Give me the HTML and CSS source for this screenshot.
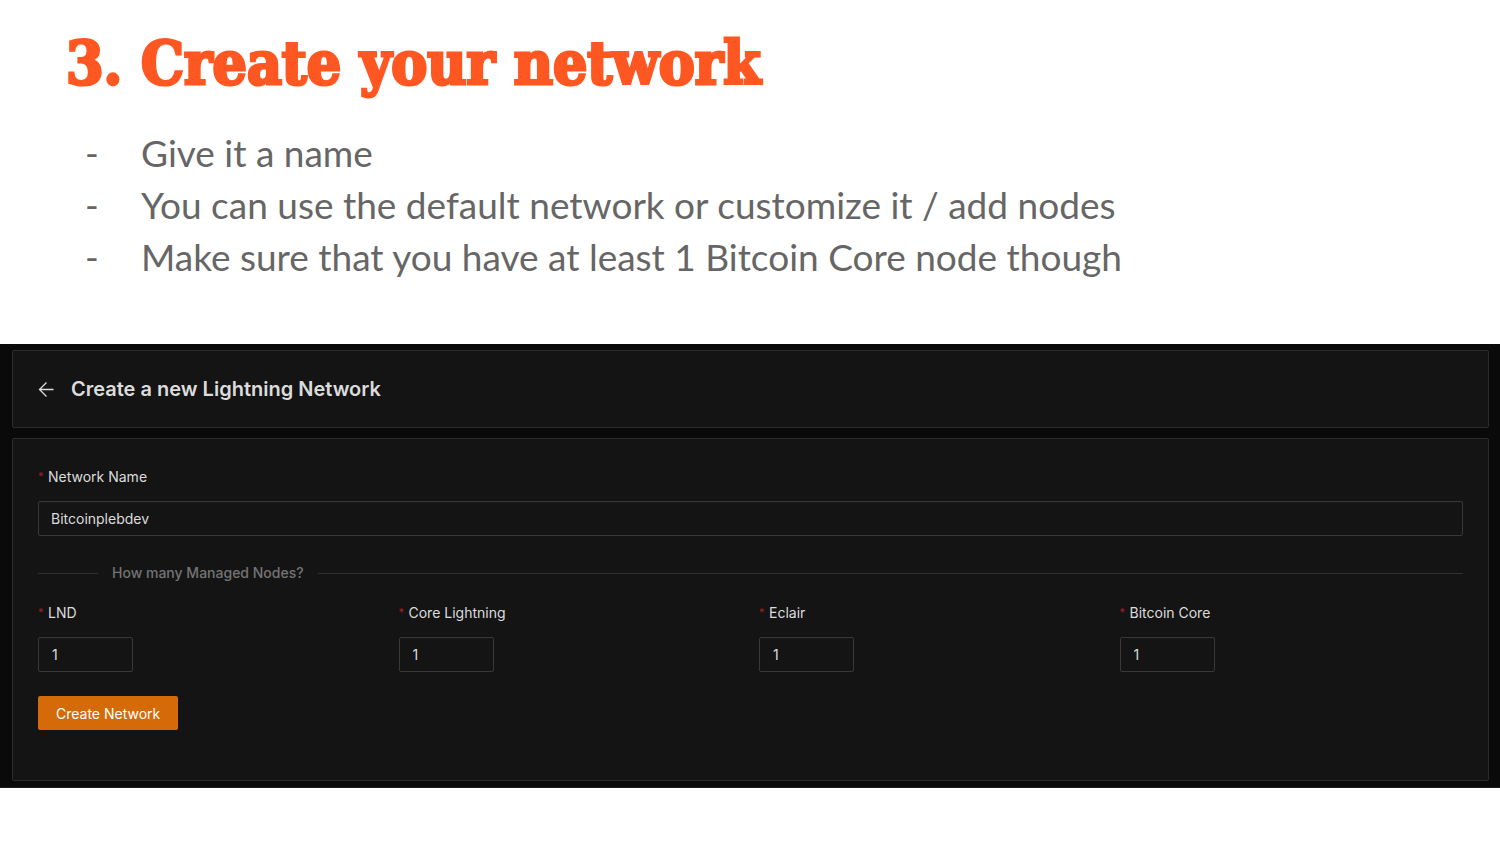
FILE: index.html
```html
<!DOCTYPE html>
<html lang="en">

<head>
    <meta charset="UTF-8">
    <meta name="viewport" content="width=device-width, initial-scale=1.0">
    <title>Create your network</title>
    <link rel="stylesheet" href="styles.css">
</head>

<body>
    <header class="intro">
        <h1>3. Create your network</h1>
        <ul>
            <li>Give it a name</li>
            <li>You can use the default network or customize it / add nodes</li>
            <li>Make sure that you have at least 1 Bitcoin Core node though</li>
        </ul>
    </header>
    <main class="app">
        <div class="card page-header">
            <button type="button" class="back" aria-label="Back">
                <svg viewBox="0 0 16 16" width="16" height="16">
                    <path d="M15.5 8.5H2M8.5 1.5L1.5 8.5L8.5 15.5" />
                </svg>
            </button>
            <h2>Create a new Lightning Network</h2>
        </div>
        <form class="card network-form">
            <label class="required" for="name">Network Name</label>
            <input class="name" id="name" type="text" value="Bitcoinplebdev">
            <div class="divider">How many Managed Nodes?</div>
            <div class="nodes">
                <div>
                    <label class="required" for="lnd">LND</label>
                    <input id="lnd" type="text" inputmode="numeric" value="1">
                </div>
                <div>
                    <label class="required" for="cln">Core Lightning</label>
                    <input id="cln" type="text" inputmode="numeric" value="1">
                </div>
                <div>
                    <label class="required" for="eclair">Eclair</label>
                    <input id="eclair" type="text" inputmode="numeric" value="1">
                </div>
                <div>
                    <label class="required" for="bitcoin">Bitcoin Core</label>
                    <input id="bitcoin" type="text" inputmode="numeric" value="1">
                </div>
            </div>
            <button type="button" class="submit">Create Network</button>
        </form>
    </main>
</body>

</html>
```

FILE: styles.css
```css
* {
    padding: 0;
    margin: 0;
    box-sizing: border-box;
}

body {
    background-color: #fff;
    font-family: Inter, "Liberation Sans", sans-serif;
}

.intro {
    padding: 27px 66px 61px;
}

.intro h1 {
    color: #ff5722;
    font: 700 60px/72px "DejaVu Serif Condensed", "DejaVu Serif", serif;
    -webkit-text-stroke: 3px #ff5722;
    white-space: nowrap;
}

.intro ul {
    margin-top: 28px;
    padding-left: 19px;
    list-style: none;
    color: #666;
    font: 37px/52px Lato, sans-serif;
}

.intro li {
    display: flex;
    white-space: nowrap;
}

.intro li::before {
    content: "-";
    width: 56px;
}

.app {
    display: flex;
    flex-direction: column;
    gap: 10px;
    padding: 6px 11px 6px 12px;
    border-bottom: 1px solid #1c1c1c;
    background-color: #0a0a0a;
    color: #dcdcdc;
    font-size: 14px;
}

.card {
    border: 1px solid #2c2c2c;
    border-radius: 2px;
    background-color: #141414;
}

.page-header {
    display: flex;
    align-items: center;
    gap: 17px;
    height: 78px;
    padding: 0 25px;
}

.page-header h2 {
    font-size: 20px;
    font-weight: 600;
}

.back {
    display: flex;
    border: 0;
    background: none;
}

.back path {
    fill: none;
    stroke: #dcdcdc;
    stroke-width: 1.3;
}

.network-form {
    padding: 24px 25px 50px;
}

label {
    display: flex;
    line-height: 28px;
}

.required::before {
    content: "*";
    width: 10px;
    color: #a61d24;
    font-size: 11px;
    line-height: 26px;
}

input {
    display: block;
    width: 95px;
    height: 35px;
    margin-top: 10px;
    padding: 0 13px;
    border: 1px solid #383838;
    border-radius: 2px;
    background: none;
    color: #dcdcdc;
    font: inherit;
}

.name {
    width: 100%;
    padding: 0 12px;
}

.divider {
    display: flex;
    align-items: center;
    gap: 14px;
    margin: 24px 0 13px;
    color: #747474;
    font-weight: 500;
    line-height: 26px;
}

.divider::before,
.divider::after {
    content: "";
    width: 60px;
    border-top: 1px solid #303030;
}

.divider::after {
    flex: 1;
}

.nodes {
    display: grid;
    grid-template-columns: repeat(4, 1fr);
    gap: 17px;
}

.submit {
    height: 34px;
    margin-top: 24px;
    padding: 0 18px;
    border: 0;
    border-radius: 2px;
    background-color: #d46b08;
    color: #fff;
    font: inherit;
}
```
